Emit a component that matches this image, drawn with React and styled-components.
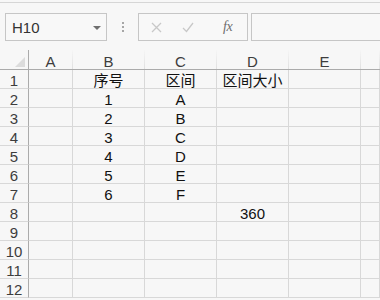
import React from "react";
import styled, { createGlobalStyle } from "styled-components";

const GlobalStyle = createGlobalStyle`
  html, body {
    margin: 0;
    padding: 0;
    background: #f7f7f7;
  }
  body {
    font-family: "Liberation Sans", "Noto Sans CJK SC", sans-serif;
    overflow: hidden;
  }
`;

const Window = styled.div`
  width: 380px;
  height: 300px;
  overflow: hidden;
  background: #f7f7f7;
  padding-top: 2px;
  box-sizing: border-box;
`;

const Toolbar = styled.div`
  border-top: 1px solid #d6d6d6;
  padding: 10px 0 9px 5px;
  display: flex;
  align-items: center;
  height: 28px;
  box-sizing: content-box;
`;

const Box = styled.div`
  height: 28px;
  box-sizing: border-box;
  border: 1px solid #c6c6c6;
  background: #f8f8f8;
  display: flex;
  align-items: center;
  flex: none;
`;

const NameBox = styled(Box)`
  width: 102px;
  padding: 1px 5px 0 6px;
  justify-content: space-between;
  font-size: 15px;
  color: #333;
`;

const Caret = styled.span`
  width: 0;
  height: 0;
  border-left: 4px solid transparent;
  border-right: 4px solid transparent;
  border-top: 4px solid #6f6f6f;
  margin-top: 1px;
`;

const Dots = styled.div`
  width: 31px;
  display: flex;
  flex-direction: column;
  align-items: center;
  gap: 2px;
  flex: none;

  span {
    width: 2px;
    height: 2px;
    background: #a6a6a6;
  }
`;

const ActionBox = styled(Box)`
  width: 110px;
  padding-left: 2px;
`;

const ActionIcon = styled.span`
  width: 31px;
  display: flex;
  justify-content: center;
  color: ${(p) => p.$color || "#c8c8c8"};
`;

const Fx = styled.span`
  font-family: "Liberation Serif", serif;
  font-style: italic;
  font-size: 14px;
  color: #6e6e6e;
  margin-left: 20px;
  letter-spacing: -0.5px;
`;

const FormulaBar = styled(Box)`
  margin-left: 3px;
  flex: 1;
  margin-right: -10px;
`;

const Sheet = styled.div`
  display: grid;
  grid-template-columns: 29px 44px repeat(4, 72px) 1fr;
  grid-auto-rows: 19px;
  grid-template-rows: 20px;
`;

const Cell = styled.div`
  box-sizing: border-box;
  border-right: 1px solid #d8d8d8;
  border-bottom: 1px solid #d8d8d8;
  display: flex;
  align-items: center;
  justify-content: center;
  padding-top: 3px;
  font-size: 15px;
  color: #111;
  white-space: nowrap;
  line-height: 15px;
`;

const ColHead = styled(Cell)`
  color: #3d3d3d;
  border-bottom: 1px solid #ababab;
  border-right: 1px solid transparent;
  border-image: linear-gradient(to bottom, #f7f7f7, #dedede) 1;
  border-image-width: 0 1px 0 0;
  position: relative;

  &::after {
    content: "";
    position: absolute;
    left: -1px;
    right: -1px;
    bottom: -1px;
    height: 1px;
    background: #ababab;
  }
`;

const Corner = styled(Cell)`
  border-bottom: 1px solid #ababab;
  border-right: 1px solid #ababab;
  justify-content: flex-end;
  align-items: flex-end;
  padding: 0 3px 2px 0;
`;

const Triangle = styled.span`
  width: 0;
  height: 0;
  border-left: 10px solid transparent;
  border-bottom: 10px solid #dcdcdc;
`;

const RowHead = styled(Cell)`
  color: #3d3d3d;
  border-right: 1px solid #ababab;
`;

const columns = ["A", "B", "C", "D", "E", ""];

const data = {
  1: { B: "序号", C: "区间", D: "区间大小" },
  2: { B: "1", C: "A" },
  3: { B: "2", C: "B" },
  4: { B: "3", C: "C" },
  5: { B: "4", C: "D" },
  6: { B: "5", C: "E" },
  7: { B: "6", C: "F" },
  8: { D: "360" },
};

const rows = Array.from({ length: 12 }, (_, i) => i + 1);

const App = () => {
  return (
    <Window>
      <GlobalStyle />
      <Toolbar>
        <NameBox>
          H10
          <Caret />
        </NameBox>
        <Dots>
          <span />
          <span />
          <span />
        </Dots>
        <ActionBox>
          <ActionIcon>
            <svg width="11" height="11" viewBox="0 0 11 11">
              <path d="M1 1 L10 10 M10 1 L1 10" stroke="currentColor" strokeWidth="1.3" />
            </svg>
          </ActionIcon>
          <ActionIcon>
            <svg width="12" height="11" viewBox="0 0 12 11">
              <path d="M1 6 L4.5 9.5 L11 1" stroke="currentColor" strokeWidth="1.3" fill="none" />
            </svg>
          </ActionIcon>
          <Fx>fx</Fx>
        </ActionBox>
        <FormulaBar />
      </Toolbar>
      <Sheet>
        <Corner>
          <Triangle />
        </Corner>
        {columns.map((c, i) => (
          <ColHead key={i}>{c}</ColHead>
        ))}
        {rows.map((r) => (
          <React.Fragment key={r}>
            <RowHead>{r}</RowHead>
            {columns.map((c, i) => (
              <Cell key={i}>{(data[r] && data[r][c]) || ""}</Cell>
            ))}
          </React.Fragment>
        ))}
      </Sheet>
    </Window>
  );
};

export default App;
